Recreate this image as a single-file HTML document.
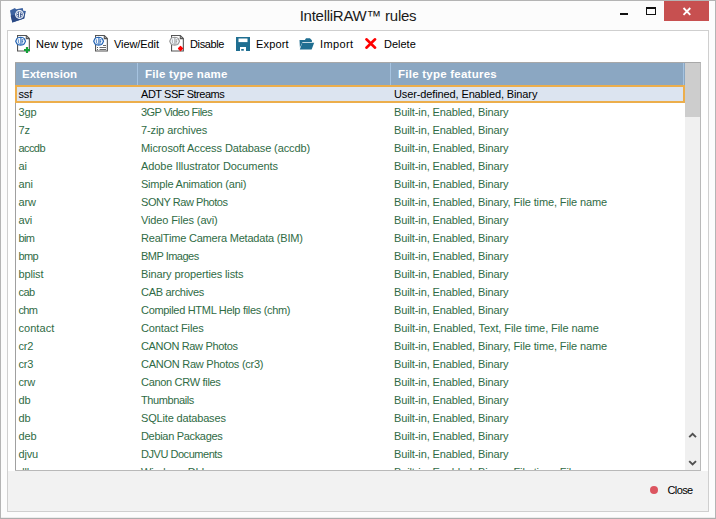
<!DOCTYPE html>
<html><head><meta charset="utf-8">
<style>
html,body{margin:0;padding:0;}
body{width:716px;height:519px;position:relative;overflow:hidden;background:#fff;font-family:"Liberation Sans",sans-serif;font-size:11px;color:#000;}
#win{position:absolute;left:0;top:0;width:714px;height:517px;border:1px solid #b4b4b4;border-bottom-color:#adadad;background:#fcfcfc;box-shadow:inset 0 -1px 0 #ececec;}
#title{position:absolute;left:0;top:5px;width:716px;text-align:center;font-size:15px;color:#1a1a1a;line-height:22px;letter-spacing:-0.27px;}
#closebtn{position:absolute;left:664px;top:1px;width:45px;height:20px;background:#c75050;}
#minbtn{position:absolute;left:620px;top:13px;width:8px;height:2px;background:#111;}
#maxbtn{position:absolute;left:646px;top:7px;width:8px;height:5px;border:1px solid #111;border-top-width:2px;}
#client{position:absolute;left:7px;top:30px;width:700px;height:480px;border:1px solid #cfcfcf;background:#fff;}
#toolbar{position:absolute;left:8px;top:31px;width:700px;height:28px;}
.tb{position:absolute;top:7px;font-size:11px;line-height:13px;color:#000;white-space:nowrap;}
#list{position:absolute;left:15px;top:62px;width:685px;height:407px;border:1px solid #b9b9b9;border-left:0;border-top-color:#a8a8a8;overflow:hidden;background:#fff;}
#lb{position:absolute;left:0;top:0;width:1px;height:407px;background:#a0a0a0;}
#hdr{position:absolute;left:1px;top:0;width:669px;height:22px;background:#8ba7c2;}
.h{position:absolute;top:1px;height:22px;line-height:21px;color:#fff;font-weight:bold;font-size:11.5px;white-space:nowrap;}
.sep{position:absolute;top:0;width:1px;height:22px;background:#a6c3e0;}
#rows{position:absolute;left:0;top:22px;width:670px;}
.row{position:relative;height:18px;line-height:19px;letter-spacing:-0.12px;color:#2f6b45;white-space:nowrap;}
.row span{position:absolute;top:0;}
.c1{left:3.4px}.c2{left:126px}.c3{left:379px}
.row.sel{color:#000;background:#dce4f0;box-shadow:inset 0 0 0 2px #ecae4c;}
#sb{position:absolute;left:670px;top:0;width:15px;height:407px;background:#f0f0f0;}
#thumb{position:absolute;left:0;top:0;width:15px;height:54px;background:#cdcdcd;}
#bottom{position:absolute;left:8px;top:471px;width:700px;height:40px;background:#f2f2f2;}
#dot{position:absolute;left:649.5px;top:485.5px;width:8.6px;height:8.6px;border-radius:50%;background:#dc5560;}
#closetxt{position:absolute;left:667.5px;top:484px;font-size:11px;line-height:13px;letter-spacing:-0.6px;}
</style></head><body>
<div id="win"></div>
<div id="title">IntelliRAW™ rules</div>
<div id="minbtn"></div><div id="maxbtn"></div>
<div id="closebtn"><svg width="45" height="20" viewBox="0 0 45 20"><path d="M19.5 7 L26.3 13.8 M26.3 7 L19.5 13.8" stroke="#fff" stroke-width="1.85" fill="none"/></svg></div>
<div id="client"></div>
<div id="toolbar"></div>
<div class="tb" style="left:36px;top:38px;letter-spacing:0.13px">New type</div>
<div class="tb" style="left:114px;top:38px;letter-spacing:-0.08px">View/Edit</div>
<div class="tb" style="left:190px;top:38px;letter-spacing:-0.37px">Disable</div>
<div class="tb" style="left:256px;top:38px;letter-spacing:0.17px">Export</div>
<div class="tb" style="left:320px;top:38px;letter-spacing:0.4px">Import</div>
<div class="tb" style="left:384px;top:38px">Delete</div>
<svg id="icons" style="position:absolute;left:0;top:0" width="716" height="60" viewBox="0 0 716 60">
<defs>
<g id="page"><path d="M0.55 0.55 H9.3 L12.35 3.6 V16 H0.55 Z" fill="#fff" stroke="#555" stroke-width="1.1" stroke-linejoin="miter"/><path d="M9.3 0.55 V3.6 H12.35" fill="none" stroke="#555" stroke-width="1.1"/></g>
<g id="logo"><path d="M-4.9 0 L-3.6 -2.7 Q-2.8 -3.9 0 -3.95 Q2.8 -3.9 3.6 -2.7 L4.9 0 L3.6 2.7 Q2.8 3.9 0 3.95 Q-2.8 3.9 -3.6 2.7 Z" fill="#f2f7fc" stroke="currentColor" stroke-width="1.2" stroke-linejoin="round"/><path d="M0.3 -3.6 V3.6" stroke="currentColor" stroke-width="1" fill="none"/><path d="M-2.2 -1.8 V1 Q-2.2 2.3 -1 2.3 M2.9 -1.5 H1.3 M2.6 0.3 H1.3 M1.6 -1.5 V2.6" stroke="currentColor" stroke-width="0.8" fill="none" opacity="0.9"/></g>
</defs>
<!-- app icon -->
<path d="M10 10.4 L14.9 8.1 L16.1 9.2 L22.7 8.1 L23.3 10.7 L25.9 11 L24.2 18.5 L12.3 22.5 Z" fill="#3c62a0"/>
<path d="M10.6 15.5 L24.9 13 L24.2 18.5 L12.3 22.5 Z" fill="#2c4a85"/>
<circle cx="19.5" cy="14.5" r="4.4" fill="#fff"/><circle cx="19.5" cy="14.5" r="3.1" fill="none" stroke="#3c62a0" stroke-width="0.7"/>
<path d="M18.6 11.8 V17.2 M20.6 12.6 V17.2 M17 14.6 H18.6 M20.6 14.4 H22.4" stroke="#2c4a85" stroke-width="0.9" fill="none"/>
<!-- new type -->
<use href="#page" x="17" y="35"/>
<g transform="translate(20.6 41.2)" color="#2565b5"><use href="#logo"/></g>
<path d="M27 47 V53 M24 50 H30" stroke="#14a038" stroke-width="2.2" fill="none"/>
<!-- view/edit -->
<use href="#page" x="95" y="35"/>
<g transform="translate(98.6 41.2)" color="#2565b5"><use href="#logo"/></g>
<path d="M103 45.5 H106 M99.5 47.5 H106 M99.5 49.5 H106" stroke="#5a5a5a" stroke-width="0.9" fill="none"/>
<rect x="97" y="47" width="1" height="1" fill="#5a5a5a"/><rect x="97" y="49" width="1" height="1" fill="#5a5a5a"/>
<!-- disable -->
<use href="#page" x="171" y="35"/>
<g transform="translate(174.6 41.2)" color="#9c9c9c"><use href="#logo"/></g>
<path d="M180.5 46.5 L182.5 48.5 L180.5 50.5 L178.5 48.5 Z" fill="#ff0000" stroke="#ff0000" stroke-width="1.2" stroke-linejoin="round"/>
<!-- export floppy -->
<rect x="236" y="37" width="14" height="14" fill="#1f6e91"/>
<rect x="238.5" y="38.5" width="9" height="3.6" fill="#fff"/>
<rect x="240" y="47" width="6" height="4" fill="#fff"/>
<rect x="241.2" y="49" width="2.6" height="1.7" fill="#1f6e91"/>
<!-- import folder -->
<path d="M299.5 40 H304.9 L306 38.3 H309.9 L311.9 40.3 V42 H302.6 L299.9 47.6 Z" fill="#1f6e91"/>
<path d="M302.3 42.8 H314.2 L311.6 49.6 H299.8 Z" fill="#1f6e91"/>
<!-- delete -->
<path d="M366.4 39.3 L375.1 47.7 M375.1 39.3 L366.4 47.7" stroke="#ff0000" stroke-width="2.6" stroke-linecap="round" fill="none"/>
</svg>
<div id="bottom"></div>
<div id="dot"></div><div id="closetxt">Close</div>
<div id="list">
<div id="lb"></div>
<div id="hdr">
<div class="h" style="left:6px">Extension</div>
<div class="sep" style="left:121px"></div>
<div class="h" style="left:129px;letter-spacing:0.19px">File type name</div>
<div class="sep" style="left:374px"></div>
<div class="h" style="left:382px;letter-spacing:0.24px">File type features</div>
<div class="sep" style="left:667px"></div>
</div>
<div id="rows">
<div class="row sel"><span class="c1">ssf</span><span class="c2" style="letter-spacing:-0.46px">ADT SSF Streams</span><span class="c3">User-defined, Enabled, Binary</span></div>
<div class="row"><span class="c1">3gp</span><span class="c2" style="letter-spacing:-0.53px">3GP Video Files</span><span class="c3">Built-in, Enabled, Binary</span></div>
<div class="row"><span class="c1">7z</span><span class="c2">7-zip archives</span><span class="c3">Built-in, Enabled, Binary</span></div>
<div class="row"><span class="c1" style="letter-spacing:-0.55px">accdb</span><span class="c2" style="letter-spacing:-0.10px">Microsoft Access Database (accdb)</span><span class="c3">Built-in, Enabled, Binary</span></div>
<div class="row"><span class="c1">ai</span><span class="c2" style="letter-spacing:-0.07px">Adobe Illustrator Documents</span><span class="c3">Built-in, Enabled, Binary</span></div>
<div class="row"><span class="c1">ani</span><span class="c2" style="letter-spacing:-0.22px">Simple Animation (ani)</span><span class="c3">Built-in, Enabled, Binary</span></div>
<div class="row"><span class="c1">arw</span><span class="c2" style="letter-spacing:-0.45px">SONY Raw Photos</span><span class="c3">Built-in, Enabled, Binary, File time, File name</span></div>
<div class="row"><span class="c1">avi</span><span class="c2">Video Files (avi)</span><span class="c3">Built-in, Enabled, Binary</span></div>
<div class="row"><span class="c1" style="letter-spacing:-0.60px">bim</span><span class="c2" style="letter-spacing:-0.20px">RealTime Camera Metadata (BIM)</span><span class="c3">Built-in, Enabled, Binary</span></div>
<div class="row"><span class="c1" style="letter-spacing:-0.60px">bmp</span><span class="c2" style="letter-spacing:-0.51px">BMP Images</span><span class="c3">Built-in, Enabled, Binary</span></div>
<div class="row"><span class="c1">bplist</span><span class="c2">Binary properties lists</span><span class="c3">Built-in, Enabled, Binary</span></div>
<div class="row"><span class="c1" style="letter-spacing:-0.45px">cab</span><span class="c2" style="letter-spacing:-0.30px">CAB archives</span><span class="c3">Built-in, Enabled, Binary</span></div>
<div class="row"><span class="c1" style="letter-spacing:-0.60px">chm</span><span class="c2" style="letter-spacing:-0.31px">Compiled HTML Help files (chm)</span><span class="c3">Built-in, Enabled, Binary</span></div>
<div class="row"><span class="c1" style="letter-spacing:0.08px">contact</span><span class="c2">Contact Files</span><span class="c3" style="letter-spacing:-0.08px">Built-in, Enabled, Text, File time, File name</span></div>
<div class="row"><span class="c1">cr2</span><span class="c2" style="letter-spacing:-0.34px">CANON Raw Photos</span><span class="c3">Built-in, Enabled, Binary, File time, File name</span></div>
<div class="row"><span class="c1">cr3</span><span class="c2" style="letter-spacing:-0.25px">CANON Raw Photos (cr3)</span><span class="c3">Built-in, Enabled, Binary</span></div>
<div class="row"><span class="c1">crw</span><span class="c2" style="letter-spacing:-0.31px">Canon CRW files</span><span class="c3">Built-in, Enabled, Binary</span></div>
<div class="row"><span class="c1">db</span><span class="c2" style="letter-spacing:-0.40px">Thumbnails</span><span class="c3">Built-in, Enabled, Binary</span></div>
<div class="row"><span class="c1">db</span><span class="c2" style="letter-spacing:-0.17px">SQLite databases</span><span class="c3">Built-in, Enabled, Binary</span></div>
<div class="row"><span class="c1">deb</span><span class="c2" style="letter-spacing:-0.32px">Debian Packages</span><span class="c3">Built-in, Enabled, Binary</span></div>
<div class="row"><span class="c1">djvu</span><span class="c2" style="letter-spacing:-0.46px">DJVU Documents</span><span class="c3">Built-in, Enabled, Binary</span></div>
<div class="row"><span class="c1">dll</span><span class="c2">Windows DLL</span><span class="c3">Built-in, Enabled, Binary, File time, File name</span></div></div>
<div id="sb"><div id="thumb"></div><svg style="position:absolute;left:0;top:366px" width="15" height="41" viewBox="0 0 15 41"><path d="M4.2 8.2 L7.6 4.8 L11 8.2 M4.2 32.1 L7.6 35.5 L11 32.1" stroke="#505050" stroke-width="1.9" fill="none"/></svg></div>
</div>
</body></html>
